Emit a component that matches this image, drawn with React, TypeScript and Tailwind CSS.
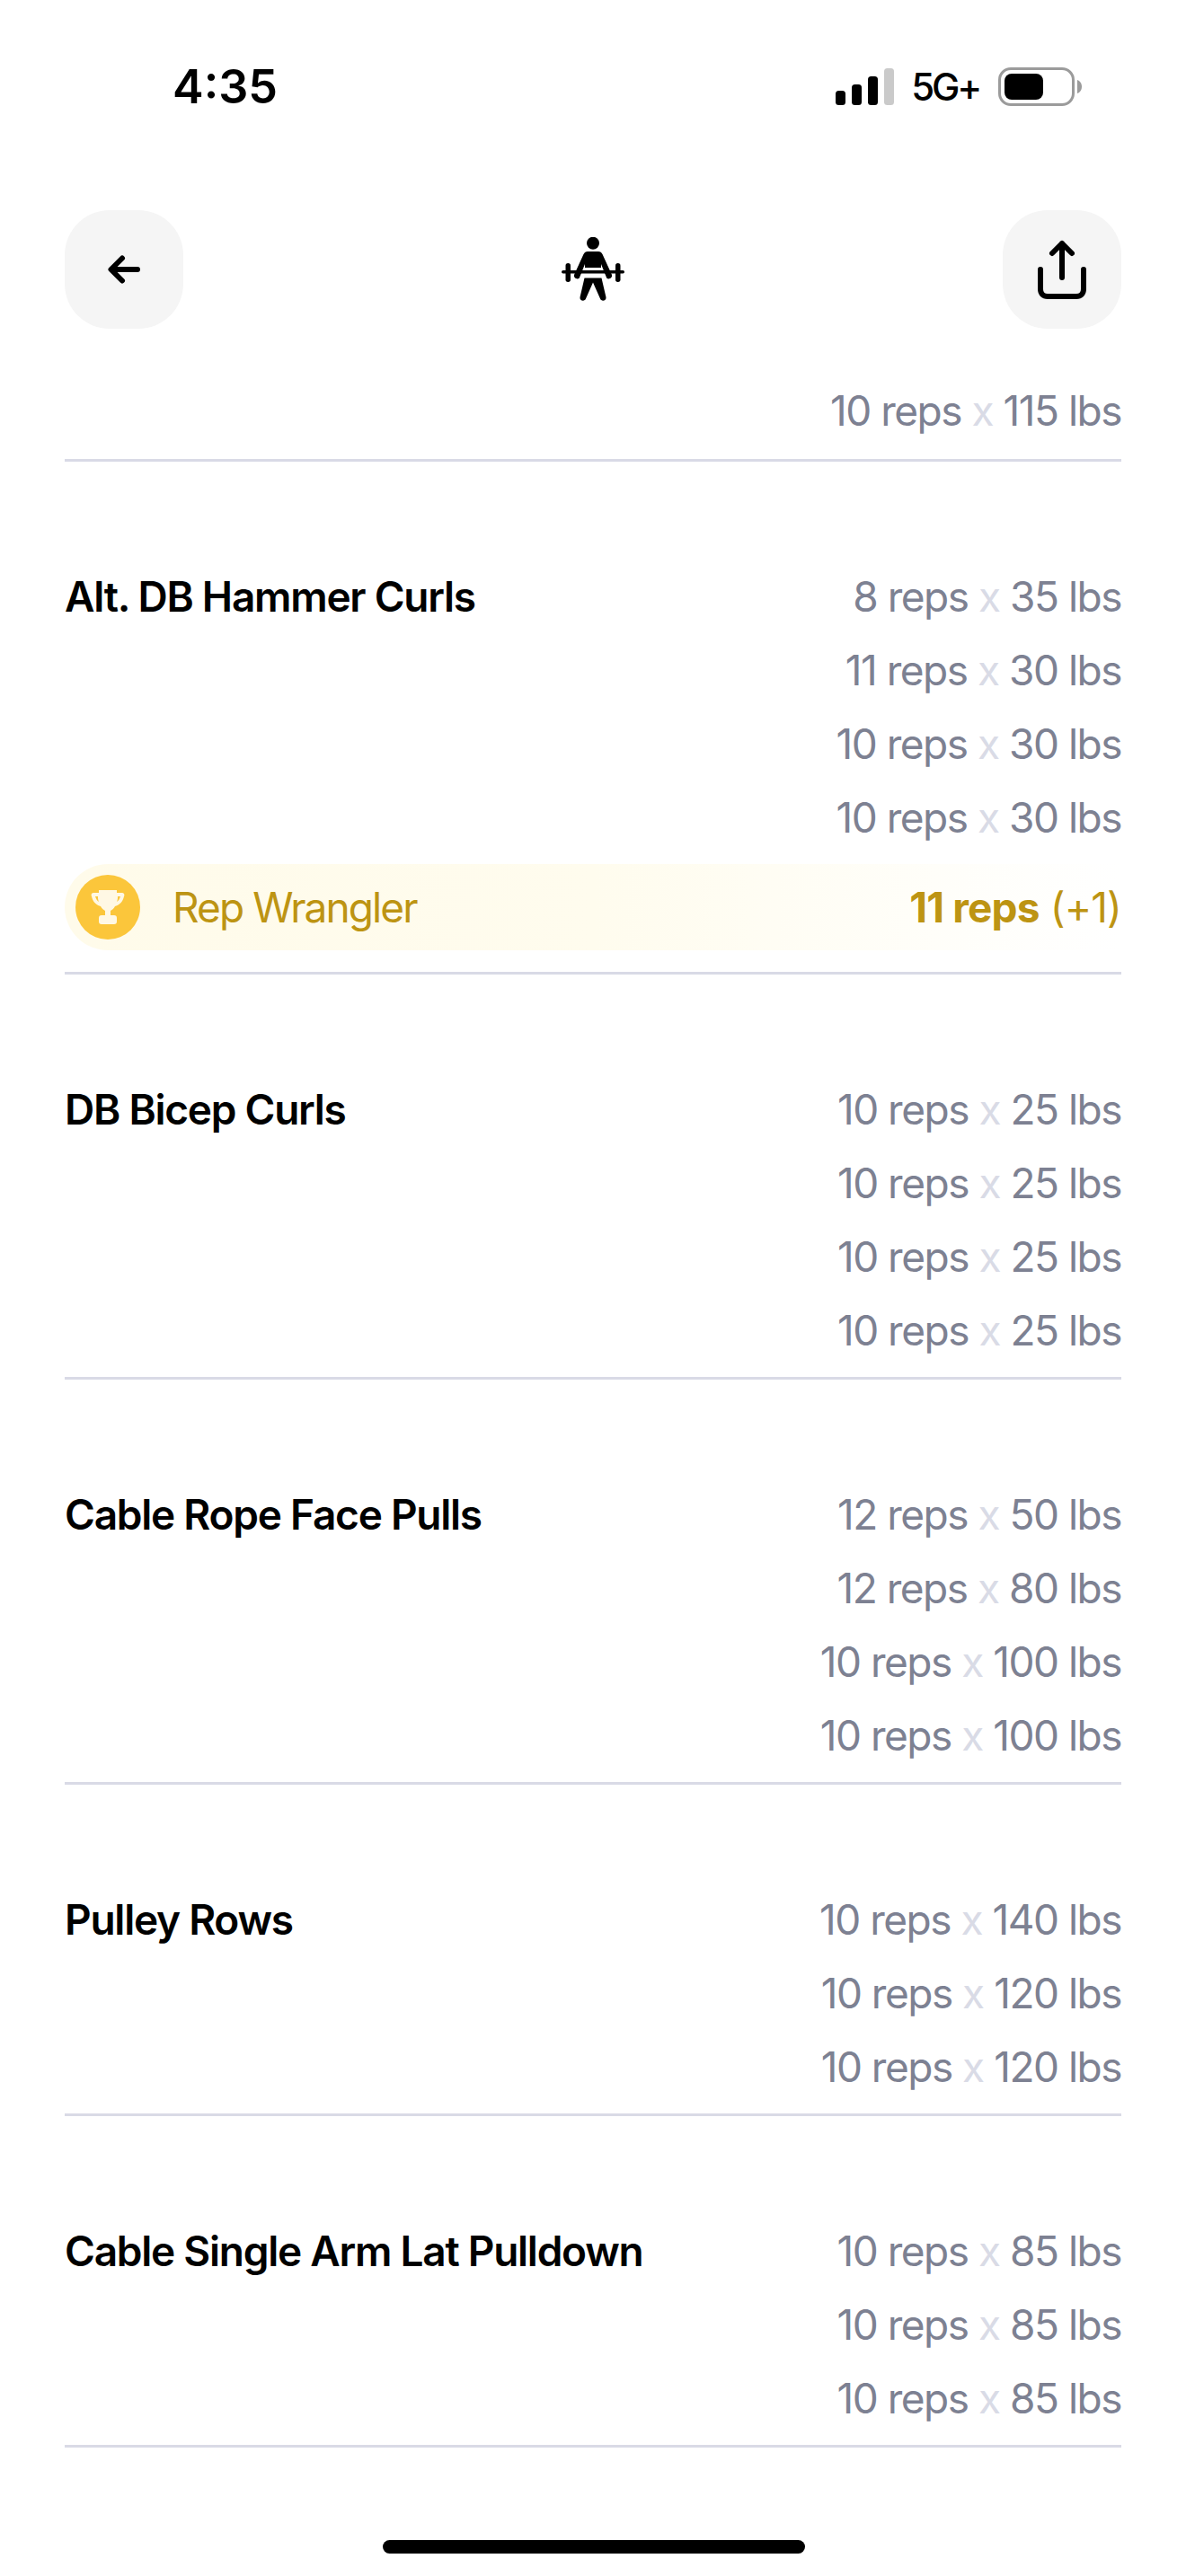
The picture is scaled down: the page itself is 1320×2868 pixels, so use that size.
import React from 'react';

type Exercise = {
  name: string;
  sets: [string, string][];
  award?: boolean;
};

const exercises: Exercise[] = [
  {
    name: 'Alt. DB Hammer Curls',
    sets: [
      ['8', '35'],
      ['11', '30'],
      ['10', '30'],
      ['10', '30'],
    ],
    award: true,
  },
  {
    name: 'DB Bicep Curls',
    sets: [
      ['10', '25'],
      ['10', '25'],
      ['10', '25'],
      ['10', '25'],
    ],
  },
  {
    name: 'Cable Rope Face Pulls',
    sets: [
      ['12', '50'],
      ['12', '80'],
      ['10', '100'],
      ['10', '100'],
    ],
  },
  {
    name: 'Pulley Rows',
    sets: [
      ['10', '140'],
      ['10', '120'],
      ['10', '120'],
    ],
  },
  {
    name: 'Cable Single Arm Lat Pulldown',
    sets: [
      ['10', '85'],
      ['10', '85'],
      ['10', '85'],
    ],
  },
];

const SetRow = ({ reps, lbs }: { reps: string; lbs: string }) => (
  <div className="h-[82px] leading-[82px] text-right text-[46px] tracking-[-1.5px] text-[#7d8192] whitespace-nowrap">
    {reps} reps <span className="text-[#d9dbe6]">x</span> {lbs} lbs
  </div>
);

const StatusBar = () => (
  <div className="h-[234px]">
    <div className="flex items-start justify-between pl-[192px] pr-[116px] pt-[64px]">
      <span className="text-[52px] leading-[66px] font-semibold text-black">4:35</span>
      <div className="flex items-center pt-[11px]">
        <svg width="65" height="41" viewBox="0 0 65 41" fill="none">
          <rect x="0" y="25" width="11" height="16" rx="3.500" fill="#000" />
          <rect x="18" y="18" width="11" height="23" rx="3.500" fill="#000" />
          <rect x="36" y="9" width="11" height="32" rx="3.500" fill="#000" />
          <rect x="54" y="0" width="11" height="41" rx="3.500" fill="#cacaca" />
        </svg>
        <span className="ml-[19px] text-[42px] leading-[42px] font-medium tracking-[-3.2px] text-black">5G+</span>
        <svg className="ml-[21px]" width="93" height="43" viewBox="0 0 93 43" fill="none">
          <rect x="1.500" y="1.500" width="82" height="40" rx="12.500" stroke="#9b9b9b" strokeWidth="3" />
          <rect x="7" y="7" width="43" height="29" rx="8" fill="#000" />
          <path d="M88 14c3 1 5 4 5 7.500s-2 6.500-5 7.500z" fill="#9b9b9b" />
        </svg>
      </div>
    </div>
  </div>
);

const Header = () => (
  <div className="flex items-center justify-between px-[72px]">
    <button className="w-[132px] h-[132px] rounded-[50px] bg-[#f5f5f5] flex items-center justify-center">
      <svg width="36" height="32" viewBox="0 0 36 32" fill="none" stroke="#000" strokeWidth="6" strokeLinecap="round" strokeLinejoin="round">
        <path d="M33 16H4M16 3.500L3.500 16 16 28.500" />
      </svg>
    </button>
    <svg width="70" height="72" viewBox="25 14 70 72" fill="#000">
      <circle cx="60" cy="20.700" r="7" />
      <path d="M54 30H66C68 30 69.500 31 70.500 33L81 56C82 60 76 62 75 59L69 44V48H51V44L45 59C44 62 38 60 39 56L49.500 33C50.500 31 52 30 54 30z" />
      <rect x="25" y="51" width="70" height="3.500" rx="1.700" />
      <rect x="29.500" y="43" width="5.500" height="21" rx="2.700" />
      <rect x="85" y="43" width="5.500" height="21" rx="2.700" />
      <path d="M50.500 59.500H69.500L74.500 81C75.200 85 69 86 68 82.500L60 64.500L52 82.500C51 86 44.800 85 45.500 81z" />
    </svg>
    <button className="w-[132px] h-[132px] rounded-[50px] bg-[#f5f5f5] flex items-center justify-center">
      <svg width="60" height="72" viewBox="0 0 60 72" fill="none" stroke="#000" strokeWidth="6" strokeLinecap="round" strokeLinejoin="round">
        <path d="M30 45V7M19 18L30 7l11 11" />
        <path d="M6 36V58c0 5 3 8 8 8H46c5 0 8-3 8-8V36" />
      </svg>
    </button>
  </div>
);

const Award = () => (
  <div className="mt-[11px] h-[96px] rounded-l-[48px] bg-gradient-to-r from-[#fffbea] via-[#fffcee] to-white flex items-center pl-[12px] text-[46px] text-[#bd9413]">
    <div className="w-[72px] h-[72px] rounded-full bg-[#fbc63b] flex items-center justify-center">
      <svg width="40" height="40" viewBox="0 0 40 40" fill="#fff8e4">
        <path d="M10 1h20v3h6c2 0 3 2 2 4-1 5-4 9-10 11-1 2-3 4-5 5v5h4c2 0 3 1 3 3v4c0 2-1 3-3 3H13c-2 0-3-1-3-3v-4c0-2 1-3 3-3h4v-5c-2-1-4-3-5-5C6 17 3 13 2 8 1 6 2 4 4 4h6zM6 8c1 3 2 5 4 6-1-2-1-4-1-6zm28 0h-3c0 2 0 4-1 6 2-1 3-3 4-6z" />
      </svg>
    </div>
    <span className="ml-[36px] tracking-[-1.9px]">Rep Wrangler</span>
    <span className="ml-auto tracking-[-0.85px]">
      <span className="font-bold">11 reps</span> (+1)
    </span>
  </div>
);

export default function App() {
  return (
    <div className="w-[1320px] h-[2868px] bg-white overflow-hidden relative font-['Inter',sans-serif]">
      <StatusBar />
      <Header />

      <div className="px-[72px]">
        <div className="pt-[50px] pb-[13px] border-b-[3px] border-[#d9dae6]">
          <SetRow reps="10" lbs="115" />
        </div>

        {exercises.map((ex) => (
          <div key={ex.name} className={`pt-[109px] border-b-[3px] border-[#d9dae6] ${ex.award ? 'pb-[24px]' : 'pb-[11px]'}`}>
            <div className="flex items-start justify-between">
              <div className="text-[46px] leading-[82px] font-semibold tracking-[-1.25px] text-black whitespace-nowrap">{ex.name}</div>
              <div>
                {ex.sets.map((s, i) => (
                  <SetRow key={i} reps={s[0]} lbs={s[1]} />
                ))}
              </div>
            </div>
            {ex.award && <Award />}
          </div>
        ))}
      </div>

      <div className="absolute left-[426px] bottom-[25px] w-[470px] h-[15px] rounded-full bg-black" />
    </div>
  );
}
